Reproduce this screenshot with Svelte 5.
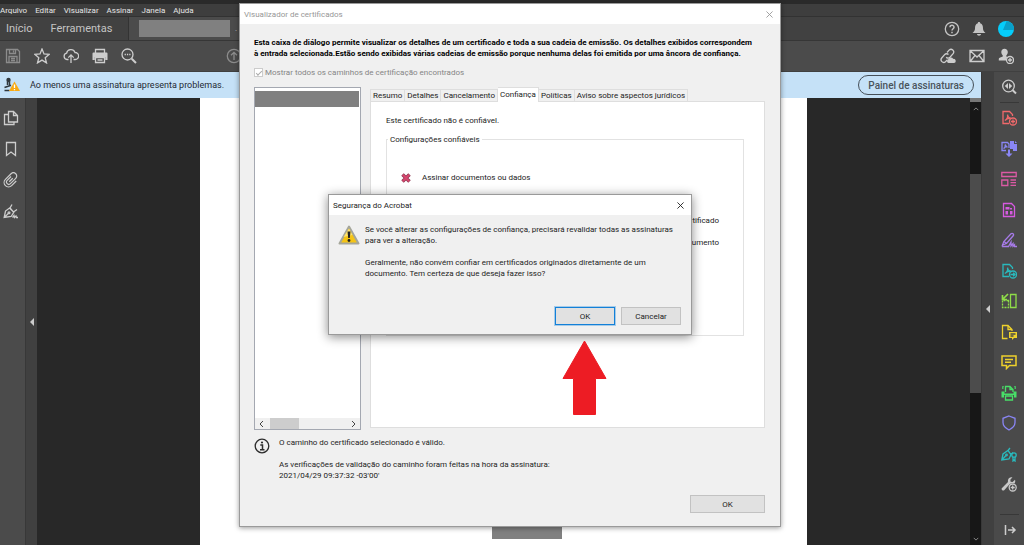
<script lang="ts">
  const menus = ['Arquivo', 'Editar', 'Visualizar', 'Assinar', 'Janela', 'Ajuda'];

  const fileTools = [
    { name: 'Salvar', dim: true, art: '<path d="M1.5 1.5h11l2 2v11h-13zM4.5 1.5v4h6v-4M4 14.500v-6h8v6M6 10.500h4M6 12.500h4M8.500 2.500v2"/>' },
    { name: 'Favoritos', dim: false, art: '<path d="M8 1l2 4.900 5.200.400-4 3.400 1.300 5.200L8 12.100l-4.500 2.800 1.300-5.200-4-3.400L6 5.900z"/>' },
    { name: 'Enviar para a nuvem', dim: false, art: '<path d="M5.500 11.500H4a3.200 3.200 0 0 1-.400-6.300A4.400 4.400 0 0 1 12 4.500a3.500 3.500 0 0 1 .300 7h-1.800M8 15V7M5.300 9.600L8 6.900l2.700 2.700"/>' },
    { name: 'Imprimir', dim: false, art: '<path d="M3.500 5V1.500h9V5M3.500 9.500h9v5h-9zM5.500 12h5"/><path fill="currentColor" stroke="none" d="M1.500 4.500h13a1 1 0 0 1 1 1V12h-2.300V9H2.800v3H.500V5.500a1 1 0 0 1 1-1z"/>' },
    { name: 'Localizar', dim: false, art: '<circle cx="6.500" cy="6.500" r="5.500"/><path d="M10.700 10.700L15 15" stroke-width="2"/><path d="M3.600 6.500h1.300M5.900 6.500h1.300M8.200 6.500h1.300"/>' }
  ];

  const shareTools = [
    { name: 'Compartilhar link', art: '<path d="M7 4.500l2.300-2.600a2.700 2.700 0 0 1 4 3.500L10 9.200a2.700 2.700 0 0 1-3.800 0M8.500 6.500a2.700 2.700 0 0 0-3.900.200L1.700 10a2.700 2.700 0 0 0 3.800 3.800L7 12"/><path fill="currentColor" stroke="none" d="M8.500 15a2 2 0 0 1 .200-3.900 2.500 2.500 0 0 1 4.500-.200A2 2 0 1 1 14 15z"/>' },
    { name: 'Enviar por e-mail', art: '<path d="M1 2.500h14v11H1zM1.500 3L8 9l6.500-6M1.500 13L6 7.500M14.500 13L10 7.500"/>' },
    { name: 'Adicionar pessoas', art: '<path fill="currentColor" stroke="none" d="M6.500.800c2 0 3.300 1.300 3.300 3.300 0 1.400-.700 2.600-1.500 3.300v1l1.200.700A4.500 4.500 0 0 0 8 12.500H.800V11c0-1.200 1-1.600 4-2.600v-1C4 6.700 3.300 5.500 3.300 4.100 3.300 2.100 4.500.800 6.500.800z"/><circle cx="12" cy="12" r="3.500" fill="#4b4b4b"/><path d="M12 10v4M10 12h4"/>' }
  ];

  const navTools = [
    { name: 'Miniaturas de página', art: '<path d="M5.500 1.500h5l4 4v6.500h-9zM10.500 1.500v4h4M5 4.500H1.500v10h9.500V12.500"/>' },
    { name: 'Marcadores', art: '<path d="M3.500 1.500h9v13L8 11l-4.500 3.500z"/>' },
    { name: 'Anexos', art: '<g transform="rotate(45 8 8)"><path d="M5.600 5.500v5.500a2.300 2.300 0 0 0 4.600 0V3.500a3.300 3.300 0 0 0-6.600 0v8a4.400 4.400 0 0 0 8.800 0V5M8 5.500v5" stroke-width="1.200"/></g>' },
    { name: 'Assinaturas', art: '<path d="M1.200 14.500L2.500 8l4-3 4.300 4.300-2.700 4.200zM1.500 14.300l4.200-4.200M7 5l2-3.500M10.500 9L14 6.500M7 5l3.500 4M9.500 14.500l1.500-2 .500 2 1.500-1.500.500 1.500h1.500"/><circle cx="6" cy="9.800" r=".9"/>' }
  ];

  const pdf = '<path d="M11.500 6V4.500L8.500 1.500h-6.500v12h6M3.800 10.500c2-1 3.200-3.500 2.700-5.800.300 2.300 1.800 3.500 3.500 3.500-2 0-4.500.800-6.200 2.300"/>';
  const panelTools = [
    { name: 'Criar PDF', color: '#f0696b', art: pdf + '<circle fill="#4a4a4a" cx="12" cy="11.500" r="3.500"/><path d="M12 9.500v4M10 11.500h4"/>' },
    { name: 'Exportar PDF', color: '#8a86f5', art: '<path d="M5 9.500H1v-8h5.500L8 3v4M2.500 7.500c1.500-.700 2-2.500 1.800-4 .300 1.500 1.200 2.500 2.200 2.500"/><path fill="currentColor" stroke="none" d="M9 0h4v3h3v7h-4V8H9zM14 0l2 2h-2zM7 8.500h2v4h2.500L8 16l-3.500-3.500H7z"/>' },
    { name: 'Organizar páginas', color: '#dc5aa5', art: '<path d="M.800 1.500h14.400v4H.800zM.800 9h6v5.500h-6zM9.500 9H15M9.500 11.700H15M9.500 14.400H15"/>' },
    { name: 'Editar PDF', color: '#d65ae0', art: '<path d="M2.500 1.500h8l3 3v10h-11z"/><path fill="currentColor" stroke="none" d="M4.500 5h4v2.500h-4zM4.500 9h2.500v3.500H4.500zM9 9h2.500v3.500H9zM9 6h2v1.500H9z"/>' },
    { name: 'Preencher e assinar', color: '#a77be8', art: '<path d="M1 14.500l1.800-5L10 1.800c1.500-1.300 3.300.500 2.200 2L5.500 11.500 1.500 13M3.200 9.500l2 2M1 14.500h6.500L10 10v4l2-2.500v2.800l1.500-1.500v1.700H16"/>' },
    { name: 'Enviar para assinatura', color: '#29b9bd', art: pdf + '<circle fill="#4a4a4a" cx="12" cy="11.500" r="3.500"/><path d="M9.500 11.500h4.500M12.200 9.700l1.800 1.800-1.800 1.800"/>' },
    { name: 'Recortar', color: '#8fdd48', art: '<path d="M9.500 1.500h5.500v13H9.500z"/><path stroke-dasharray="2 1" d="M7.500 7.500v7h-6v-7z"/><path d="M7 1L2 6M1.500 2v4.500h4.500" stroke-width="1.700"/>' },
    { name: 'Combinar arquivos', color: '#eed12c', art: '<path d="M6.500 14.500H1.500v-13h5.500l4 4V7M7 1.500v4h4"/><path fill="currentColor" stroke="none" d="M8 8h8v6h-3l-2 2v-2H8z"/><path stroke="#4a4a4a" d="M9.500 10h5M9.500 12h3"/>' },
    { name: 'Comentário', color: '#eed12c', art: '<path d="M1 2h14v9.500H8.500l-3 3v-3H1zM4 5.500h8M4 8.200h6" stroke-width="1.500"/>' },
    { name: 'Digitalizar', color: '#48df68', art: '<path d="M4.500 7V1.500h4.500l3 3V7M9 1.500v3h3M4.500 11h7v4h-7z"/><path fill="currentColor" stroke="none" d="M.500 6.500h3v2h9v-2h3v6H13V10H3v2.500H.500z"/><path d="M1 3h1.500M13.500 3H15M2 1v1M14 1v1"/>' },
    { name: 'Proteger', color: '#8a86f5', art: '<path d="M8 1l6 2.300v4.200c0 3-2.200 5.500-6 7.500-3.800-2-6-4.500-6-7.500V3.300z"/>' },
    { name: 'Certificados', color: '#29b9bd', art: '<path d="M.800 14L2 8l5-3.500 3 4-2 4.500zM1 13.800l4-4.300M7 4.500l2-2.500M10 8.500l2-2"/><circle cx="5.500" cy="9" r=".8"/><circle fill="#4a4a4a" cx="13" cy="9" r="2.200"/><path d="M12 11v4l1-1 1 1v-4"/>' },
    { name: 'Mais ferramentas', color: '#c8c8c8', art: '<path fill="currentColor" stroke="none" d="M1 12l6-6C6.300 3 8.500.700 11.500 1.300L9.300 3.700l.300 2 2 .400L14 3.800c.500 1.500.200 2.500-.600 3.500a5 5 0 0 0-6 2.200l-4.200 4.700C1.800 15.300-.400 13.500 1 12z"/><circle fill="#4a4a4a" cx="11.700" cy="11.500" r="3.500"/><path d="M11.700 9.500v4M9.700 11.500h4"/>' }
  ];

  const tabs = ['Resumo', 'Detalhes', 'Cancelamento', 'Confiança', 'Políticas', 'Aviso sobre aspectos jurídicos'];
  let active = $state('Confiança');
</script>

{#snippet icon(art: string)}
  <svg class="icon" viewBox="0 0 16 16" aria-hidden="true">{@html art}</svg>
{/snippet}

<div class="app">
  <div class="strip"></div>
  <nav class="menubar">
    {#each menus as m}<button>{m}</button>{/each}
  </nav>
  <div class="doctabs">
    <div class="home">
      <button>Início</button>
      <button>Ferramentas</button>
    </div>
    <div class="doctab"><span class="mask"></span><span>.</span><span>×</span></div>
    <div class="account">
      <button aria-label="Ajuda">{@render icon('<circle cx="8" cy="8" r="6.700"/><path d="M6 6.300C6 3.700 10 3.700 10 6.200c0 1.500-2 1.600-2 3.300M8 10.700v1.500" stroke-width="1.500"/>')}</button>
      <button aria-label="Notificações">{@render icon('<path fill="currentColor" stroke="none" d="M8 1c.800 0 1.200.500 1.200 1.200C11.500 3 12 5 12 7.500c0 2 1 3 2.500 4.500H1.500C3 10.500 4 9.500 4 7.500 4 5 4.500 3 6.800 2.200 6.800 1.500 7.200 1 8 1zM6 13h4c0 2.200-4 2.200-4 0z"/>')}</button>
      <button aria-label="Conta">{@render icon('<circle cx="8" cy="8" r="8" fill="#05cdfb" stroke="none"/><path d="M5 9L8.500.200A8 8 0 0 1 16 9z" fill="#099fc9" stroke="none"/>')}</button>
    </div>
  </div>
  <div class="toolbar">
    <div class="group">
      {#each fileTools as t}<button class:dim={t.dim} aria-label={t.name}>{@render icon(t.art)}</button>{/each}
    </div>
    <button class="dim up" aria-label="Página anterior">{@render icon('<circle cx="8" cy="8" r="6.700"/><path d="M8 12V4.500M5 7.300l3-3 3 3"/>')}</button>
    <div class="group share">
      {#each shareTools as t}<button aria-label={t.name}>{@render icon(t.art)}</button>{/each}
    </div>
  </div>

  <div class="work">
    <div class="main">
      <div class="banner">
        <svg class="warn-pen" viewBox="0 0 16 16" aria-hidden="true">
          <path d="M3.500 8V4.500M5.500 8V4.500" fill="none" stroke="#30383e" stroke-width="1.500" />
          <circle cx="4.500" cy="3" r="2.200" fill="#30383e" />
          <path d="M.500 10.500L7 8.200M.500 13.500h5" fill="none" stroke="#30383e" stroke-width="1.600" />
          <path d="M10.500 4.500L16 14H5z" fill="#f9aa13" />
          <path d="M10.500 7.500v3.500M10.500 12v1.200" stroke="#fff" stroke-width="1.300" />
        </svg>
        <span>Ao menos uma assinatura apresenta problemas.</span>
        <button>Painel de assinaturas</button>
      </div>
      <div class="viewer">
        <div class="nav">
          {#each navTools as t}<button aria-label={t.name}>{@render icon(t.art)}</button>{/each}
        </div>
        <div class="gutter"><svg viewBox="0 0 4 8" aria-hidden="true"><path d="M4 0v8L0 4z" fill="#ccc" /></svg></div>
        <div class="canvas"><div class="page"><span></span></div></div>
        <div class="vscroll">
          <svg viewBox="0 0 8 5" aria-hidden="true"><path d="M1 4l3-3 3 3" /></svg>
          <span></span>
          <svg viewBox="0 0 8 5" aria-hidden="true"><path d="M1 1l3 3 3-3" /></svg>
        </div>
      </div>
    </div>
    <div class="gutter right"><svg viewBox="0 0 4 8" aria-hidden="true"><path d="M4 0v8L0 4z" fill="#ccc" /></svg></div>
    <aside>
      <button aria-label="Pesquisar ferramentas">{@render icon('<circle cx="7.500" cy="7" r="5.800"/><path d="M11.500 11L15 14.500" stroke-width="2"/><path fill="currentColor" stroke="none" d="M7 4v6L3.800 7zM8 4v6l3.200-3z"/>')}</button>
      <hr />
      <div class="tools">
        {#each panelTools as t}<button aria-label={t.name} style:color={t.color}>{@render icon(t.art)}</button>{/each}
      </div>
      <hr />
      <button aria-label="Recolher painel">{@render icon('<path d="M4.500 3v10M7 8h7M11 5l3 3-3 3" stroke-width="1.500"/>')}</button>
    </aside>
  </div>

  <section class="window cert" aria-label="Visualizador de certificados">
    <header>
      <span>Visualizador de certificados</span>
      <button aria-label="Fechar"><svg viewBox="0 0 8 8" aria-hidden="true"><path d="M.500.500l7 7M7.500.500l-7 7" /></svg></button>
    </header>
    <div class="body">
      <p class="intro">Esta caixa de diálogo permite visualizar os detalhes de um certificado e toda a sua cadeia de emissão. Os detalhes exibidos correspondem<br />à entrada selecionada.Estão sendo exibidas várias cadeias de emissão porque nenhuma delas foi emitida por uma âncora de confiança.</p>
      <label class="check"><input type="checkbox" checked disabled /> Mostrar todos os caminhos de certificação encontrados</label>
      <div class="columns">
        <div class="tree">
          <span class="selected"></span>
          <div class="hscroll">
            <svg viewBox="0 0 5 8" aria-hidden="true"><path d="M4 1L1 4l3 3" /></svg>
            <span></span>
            <svg viewBox="0 0 5 8" aria-hidden="true"><path d="M1 1l3 3-3 3" /></svg>
          </div>
        </div>
        <div class="details">
          <div class="tabs" role="tablist">
            {#each tabs as t}<button role="tab" aria-selected={active === t} class:active={active === t} onclick={() => (active = t)}>{t}</button>{/each}
          </div>
          <div class="panel">
            <p>Este certificado não é confiável.</p>
            <fieldset>
              <legend>Configurações confiáveis</legend>
              <div class="trust">
                <svg viewBox="0 0 10 10" aria-hidden="true"><path d="M1.500 1.500l7 7M8.500 1.500l-7 7" stroke="#8d3650" stroke-width="3.500" /><path d="M1.800 1.800l6.400 6.400M8.200 1.800L1.800 8.200" stroke="#d8476f" stroke-width="2" /></svg>
                <span>Assinar documentos ou dados</span>
              </div>
              <div class="tails"><span>certificado</span><span>documento</span></div>
            </fieldset>
          </div>
        </div>
      </div>
      <div class="status">
        <svg viewBox="0 0 16 16" aria-hidden="true"><circle cx="8" cy="8" r="6.800" fill="none" stroke="#2d2d2d" stroke-width="1.300" /><path d="M6.300 7H8.500v4.500M6 11.800h4.500" fill="none" stroke="#2d2d2d" stroke-width="1.500" /><circle cx="8" cy="4.500" r="1.100" fill="#2d2d2d" /></svg>
        <p>O caminho do certificado selecionado é válido.<br /><br />As verificações de validação do caminho foram feitas na hora da assinatura:<br />2021/04/29 09:37:32 -03'00'</p>
      </div>
      <div class="actions"><button class="btn wide">OK</button></div>
    </div>
  </section>

  <section class="window alert" aria-label="Segurança do Acrobat">
    <header>
      <span>Segurança do Acrobat</span>
      <button aria-label="Fechar"><svg viewBox="0 0 8 8" aria-hidden="true"><path d="M.500.500l7 7M7.500.500l-7 7" /></svg></button>
    </header>
    <div class="message">
      <svg viewBox="0 0 22 20" aria-hidden="true">
        <path d="M11 1.500L20.500 18.500h-19z" fill="#f5c414" stroke="#a5a69a" stroke-width="2" stroke-linejoin="round" />
        <path d="M11 3.500l3.500 6.500-9 2z" fill="#ffe36b" />
        <path d="M9.500 6.500h3L11.800 13h-1.600z" fill="#222" /><circle cx="11" cy="15.500" r="1.400" fill="#222" />
      </svg>
      <p>Se você alterar as configurações de confiança, precisará revalidar todas as assinaturas<br />para ver a alteração.<br /><br />Geralmente, não convém confiar em certificados originados diretamente de um<br />documento. Tem certeza de que deseja fazer isso?</p>
    </div>
    <div class="actions"><button class="btn primary">OK</button><button class="btn">Cancelar</button></div>
  </section>

  <svg class="arrow" viewBox="0 0 45 76" aria-hidden="true"><path d="M22.500 1L44 38.500H33.500V74.500H11.500V38.500H1z" fill="#ed1c24" stroke="#ed1c24" stroke-linejoin="round" /></svg>
</div>

<style>
  :global(body) { margin: 0; background: #282828; }
  .app {
    position: relative;
    display: flex;
    flex-direction: column;
    min-height: 100vh;
    overflow: hidden;
    font: 8px/11px Roboto, "Open Sans", sans-serif;
    color: #1c1c1c;
  }
  .app, .app * { box-sizing: border-box; }
  button { padding: 0; border: 0; background: none; font: inherit; color: inherit; display: flex; align-items: center; justify-content: center; white-space: nowrap; }
  p { margin: 0; white-space: nowrap; }
  svg { display: block; flex: none; }
  .icon { width: 16px; height: 16px; fill: none; stroke: currentColor; stroke-width: 1.3; }
  .strip { height: 4px; background: #2a2a2a; }
  .menubar { display: flex; gap: 8px; height: 13px; background: #3e3e3e; border-bottom: 1px solid #323232; color: #e6e6e6; }
  .doctabs { display: flex; height: 24px; background: #414141; border-bottom: 1px solid #363636; color: #c4c4c4; }
  .home { display: flex; gap: 18px; width: 129px; padding-left: 6px; border-right: 1px solid #333; font-size: 11px; }
  .doctab { display: flex; align-items: center; gap: 5px; width: 140px; padding-left: 10px; background: #4b4b4b; }
  .mask { width: 91px; height: 17px; background: #808080; }
  .account { display: flex; gap: 11px; margin-left: auto; padding-right: 10px; }
  .toolbar { display: flex; align-items: center; height: 31px; background: #4b4b4b; color: #cdcdcd; border-bottom: 1px solid #404040; }
  .group { display: flex; gap: 13px; padding-left: 5px; }
  .up { margin-left: 89px; }
  .dim { color: #8c8c8c; }
  .share { margin-left: auto; padding-right: 10px; }
  .work { display: flex; flex: 1; }
  .main { display: flex; flex-direction: column; flex: 1; min-width: 0; }
  .banner { display: flex; align-items: center; gap: 10px; height: 26px; padding: 0 7px 0 4px; background: #c5e1f7; font-size: 9px; color: #1f2a33; }
  .banner button { margin-left: auto; height: 20px; padding: 0 9px; border: 1px solid #454f58; border-radius: 10px; font-size: 10px; font-weight: 500; color: #4a545c; }
  .warn-pen { width: 16px; height: 16px; }
  .viewer { display: flex; flex: 1; }
  .nav { display: flex; flex-direction: column; align-items: center; gap: 15px; width: 25px; padding: 12px 4px 0 0; background: #4b4b4b; color: #cdcdcd; }
  .gutter { display: flex; align-items: center; justify-content: center; width: 12px; background: #404040; border-left: 1px solid #383838; }
  .gutter svg { width: 4px; height: 8px; }
  .gutter.right { width: 13px; }
  .canvas { flex: 1; display: flex; justify-content: center; background: #282828; }
  .page { display: flex; align-items: flex-end; justify-content: center; width: 65%; background: #fff; padding: 0 0 6px 46px; }
  .page span { width: 70px; height: 16px; background: #808080; }
  .vscroll { display: flex; flex-direction: column; align-items: center; justify-content: space-between; width: 11px; padding: 5px 0 4px; background: #171717; border-top: 4px solid #777; }
  .vscroll svg { width: 6px; height: 4px; fill: none; stroke: #888; stroke-width: 1.3; }
  .vscroll span { width: 11px; height: 219px; margin-bottom: 82px; background: #4c4c4c; }
  aside { display: flex; flex-direction: column; align-items: center; width: 30px; padding: 7px 2px; background: #4a4a4a; color: #cdcdcd; }
  hr { width: 19px; margin: 7px 0; border: 0; border-top: 1px solid #383838; }
  .tools { flex: 1; display: flex; flex-direction: column; justify-content: space-between; margin-bottom: 15px; }

  .window { position: absolute; background: #f0f0f0; border: 1px solid #9a9a9a; display: flex; flex-direction: column; }
  .window header { display: flex; align-items: center; justify-content: space-between; height: 20px; padding: 0 7px 0 4px; background: #fff; }
  header svg { width: 7px; height: 7px; stroke: currentColor; fill: none; }
  .cert { left: 239px; top: 3px; width: 542px; box-shadow: 0 1px 5px #0006; }
  .cert header { color: #979797; }
  .body { padding: 13px 15px 13px 14px; }
  .intro { font-weight: 700; color: #000; }
  .check { display: flex; align-items: center; gap: 2px; margin-top: 8px; color: #858585; }
  .check input { appearance: none; width: 9px; height: 9px; margin: 0; border: 1px solid #ccc; background: #fff; display: grid; place-items: center; }
  .check input::before { content: ""; width: 5px; height: 2px; border: solid #aaa; border-width: 0 0 1px 1px; transform: rotate(-45deg); }
  .columns { display: flex; gap: 9px; margin-top: 9px; }
  .tree { display: flex; flex-direction: column; justify-content: space-between; width: 107px; padding: 3px 0 0; border: 1px solid #a4a8b1; background: #fff; }
  .selected { height: 16px; margin-right: 1px; background: #808080; }
  .hscroll { display: flex; align-items: center; height: 11px; padding: 0 4px; background: #f0f0f0; }
  .hscroll svg { width: 5px; height: 8px; fill: none; stroke: #444; }
  .hscroll span { width: 29px; height: 11px; margin: 0 auto 0 6px; background: #cdcdcd; }
  .details { flex: 1; padding-bottom: 2px; }
  .tabs { display: flex; align-items: flex-end; }
  .tabs button { height: 12px; padding: 0 2px; border: 1px solid #dedede; border-width: 1px 1px 0 0; }
  .tabs button:first-child { border-left-width: 1px; }
  .tabs .active { height: 15px; padding-bottom: 1px; margin-bottom: -1px; background: #fff; }
  .panel { height: 327px; padding: 13px 20px 0 15px; border: 1px solid #dedede; background: #fff; }
  fieldset { height: 202px; margin: 8px 0 0; padding: 27px 14px 0; border: 1px solid #e2e2e2; min-width: 0; }
  legend { margin-left: -13px; padding: 0 2px; }
  .trust { display: flex; align-items: center; gap: 11px; }
  .trust svg { width: 10px; height: 10px; }
  .tails { display: grid; justify-items: end; gap: 11px; margin: 32px 10px 0 0; }
  .status { display: flex; gap: 9px; margin-top: 7px; }
  .status svg { width: 16px; height: 16px; margin-top: 1px; }
  .actions { display: flex; justify-content: flex-end; gap: 6px; margin-top: auto; }
  .btn { width: 60px; height: 18px; border: 1px solid #c2c2c2; background: #e1e1e1; }
  .btn.wide { width: 75px; margin-top: 14px; }
  .btn.primary { border: 1px solid #1380d8; box-shadow: 0 0 0 1px #1380d855; }
  .alert { left: 328px; top: 194px; width: 364px; height: 141px; box-shadow: 0 2px 10px #0007; }
  .message { display: flex; gap: 5px; padding: 9px 9px 0; }
  .message svg { width: 22px; height: 20px; margin-top: 1px; }
  .alert .actions { padding: 0 10px 9px 0; }
  .arrow { position: absolute; left: 562px; top: 340px; width: 45px; height: 76px; }
</style>
